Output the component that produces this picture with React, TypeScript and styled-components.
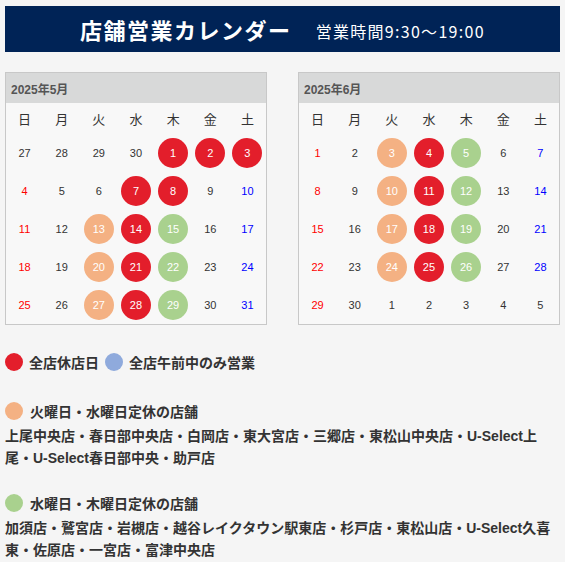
import React from "react";
import styled, { createGlobalStyle } from "styled-components";

const GlobalStyle = createGlobalStyle`
	body {
		margin: 0;
		background: #f5f5f5;
		font-family: "Liberation Sans", "Noto Sans CJK JP", sans-serif;
		color: #333;
	}
`;

const Page = styled.div`
	padding: 6px 5px 0;
`;

const Banner = styled.header`
	height: 46px;
	background: #002356;
	color: #fff;
	display: flex;
	align-items: center;
	justify-content: center;
	gap: 24px;
	font-family: "Noto Sans CJK JP", sans-serif;
`;

const BannerTitle = styled.h1`
	margin: 0;
	font-size: 22px;
	font-weight: 700;
	letter-spacing: 1.5px;
	line-height: 1;
`;

const BannerHours = styled.span`
	font-size: 16px;
	letter-spacing: 1.3px;
	line-height: 1;
	margin-top: 3px;
`;

const Calendars = styled.div`
	display: grid;
	grid-template-columns: repeat(2, 262px);
	justify-content: space-between;
	margin-top: 20px;
`;

const Month = styled.section`
	border: 1px solid #c8c8c8;
	background: #f8f8f8;
`;

const MonthTitle = styled.div`
	height: 30px;
	background: #d8d9d9;
	display: flex;
	align-items: center;
	padding-left: 5px;
	font-size: 12px;
	font-weight: 700;
	color: #555;
`;

const Grid = styled.div`
	display: grid;
	grid-template-columns: repeat(7, 1fr);
`;

const WeekDay = styled.div`
	height: 31px;
	display: flex;
	align-items: center;
	justify-content: center;
	font-family: "Noto Sans CJK JP", sans-serif;
	font-size: 13px;
	color: #333;
`;

const Cell = styled.div<{ $tone: string }>`
	height: 38px;
	display: flex;
	align-items: center;
	justify-content: center;
	font-size: 11px;
	color: ${(p) => p.$tone};
`;

const Dot = styled.span<{ $fill: string; $size?: number }>`
	width: ${(p) => p.$size ?? 30}px;
	height: ${(p) => p.$size ?? 30}px;
	border-radius: 50%;
	background: ${(p) => p.$fill};
	color: #fff;
	display: inline-flex;
	align-items: center;
	justify-content: center;
	flex-shrink: 0;
`;

const Legend = styled.div`
	margin-top: 25px;
	font-size: 14px;
	font-weight: 700;
	color: #333;
`;

const LegendRow = styled.div`
	display: flex;
	align-items: center;
	height: 24px;
	gap: 6px;
`;

const LegendItem = styled.span`
	display: inline-flex;
	align-items: center;
	gap: 6px;
`;

const Group = styled.div<{ $gap: number }>`
	margin-top: ${(p) => p.$gap}px;
`;

const GroupHead = styled.div`
	display: flex;
	align-items: center;
	gap: 7px;
	height: 24px;
	margin-bottom: 3px;
`;

const StoreList = styled.p`
	margin: 0;
	line-height: 21.5px;
`;

const COLORS = {
	closed: "#e31e2b",
	morning: "#8faadc",
	tueWed: "#f4b183",
	wedThu: "#a9d18e",
};

type Mark = keyof typeof COLORS;

interface Day {
	n: number;
	other?: boolean;
}

function buildDays(lead: number[], count: number, tail: number[]): Day[] {
	const days: Day[] = lead.map((n) => ({ n, other: true }));
	for (let i = 1; i <= count; i++) days.push({ n: i });
	tail.forEach((n) => days.push({ n, other: true }));
	return days;
}

const MONTHS = [
	{
		title: "2025年5月",
		days: buildDays([27, 28, 29, 30], 31, []),
		marks: {
			closed: [1, 2, 3, 7, 8, 14, 21, 28],
			tueWed: [13, 20, 27],
			wedThu: [15, 22, 29],
		} as Partial<Record<Mark, number[]>>,
	},
	{
		title: "2025年6月",
		days: buildDays([], 30, [1, 2, 3, 4, 5]),
		marks: {
			closed: [4, 11, 18, 25],
			tueWed: [3, 10, 17, 24],
			wedThu: [5, 12, 19, 26],
		} as Partial<Record<Mark, number[]>>,
	},
];

const WEEK = ["日", "月", "火", "水", "木", "金", "土"];

function markOf(marks: Partial<Record<Mark, number[]>>, n: number): Mark | null {
	for (const key of Object.keys(marks) as Mark[]) {
		if (marks[key]?.includes(n)) return key;
	}
	return null;
}

function MonthCalendar({ month }: { month: (typeof MONTHS)[number] }) {
	return (
		<Month>
			<MonthTitle>{month.title}</MonthTitle>
			<Grid>
				{WEEK.map((w) => (
					<WeekDay key={w}>{w}</WeekDay>
				))}
				{month.days.map((d, i) => {
					const col = i % 7;
					const mark = d.other ? null : markOf(month.marks, d.n);
					let tone = "#333";
					if (!d.other && col === 0) tone = "#ff0000";
					if (!d.other && col === 6) tone = "#0000ff";
					return (
						<Cell key={i} $tone={tone}>
							{mark ? <Dot $fill={COLORS[mark]}>{d.n}</Dot> : d.n}
						</Cell>
					);
				})}
			</Grid>
		</Month>
	);
}

export default function App() {
	return (
		<>
			<GlobalStyle />
			<Page>
				<Banner>
					<BannerTitle>店舗営業カレンダー</BannerTitle>
					<BannerHours>営業時間9:30〜19:00</BannerHours>
				</Banner>
				<Calendars>
					{MONTHS.map((m) => (
						<MonthCalendar key={m.title} month={m} />
					))}
				</Calendars>
				<Legend>
					<LegendRow>
						<LegendItem>
							<Dot $fill={COLORS.closed} $size={18} />
							全店休店日
						</LegendItem>
						<LegendItem>
							<Dot $fill={COLORS.morning} $size={18} />
							全店午前中のみ営業
						</LegendItem>
					</LegendRow>
					<Group $gap={25}>
						<GroupHead>
							<Dot $fill={COLORS.tueWed} $size={18} />
							火曜日・水曜日定休の店舗
						</GroupHead>
						<StoreList>
							上尾中央店・春日部中央店・白岡店・東大宮店・三郷店・東松山中央店・U-Select上
							<br />
							尾・U-Select春日部中央・助戸店
						</StoreList>
					</Group>
					<Group $gap={22}>
						<GroupHead>
							<Dot $fill={COLORS.wedThu} $size={18} />
							水曜日・木曜日定休の店舗
						</GroupHead>
						<StoreList>
							加須店・鷲宮店・岩槻店・越谷レイクタウン駅東店・杉戸店・東松山店・U-Select久喜
							<br />
							東・佐原店・一宮店・富津中央店
						</StoreList>
					</Group>
				</Legend>
			</Page>
		</>
	);
}
